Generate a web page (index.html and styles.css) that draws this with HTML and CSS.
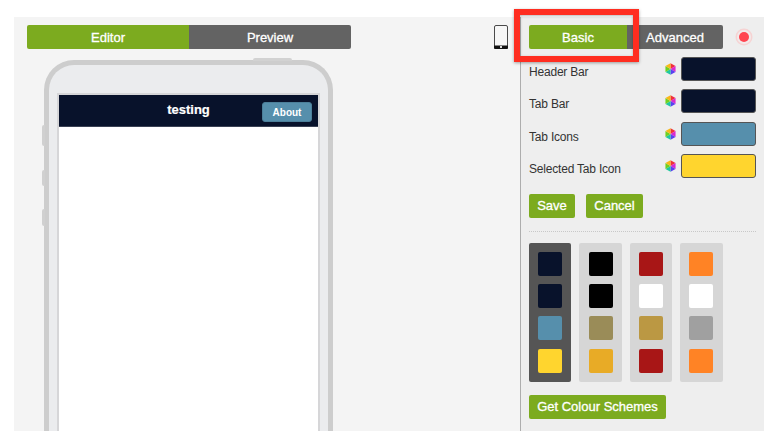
FILE: index.html
```html
<!DOCTYPE html>
<html lang="en">
<head>
<meta charset="utf-8">
<title>App editor</title>
<link rel="stylesheet" href="styles.css">
</head>
<body>
<main class="workspace">
  <section class="stage">
    <div class="stage-top">
      <div class="tabs view-tabs">
        <div class="tab active editor-tab">Editor</div>
        <div class="tab preview-tab">Preview</div>
      </div>
      <svg class="device-icon" width="14" height="24" viewBox="0 0 14 24" aria-hidden="true">
        <rect x="0.5" y="0.5" width="13" height="23" rx="1.5" fill="#f6f6f6" stroke="#4a4a4a" stroke-width="1"/>
        <rect x="0" y="20.5" width="14" height="3.5" rx="1" fill="#111"/>
        <rect x="6" y="21" width="2" height="2" fill="#ddd"/>
      </svg>
    </div>
    <div class="phone">
      <div class="phone-top-button"></div>
      <div class="phone-side-button b1"></div>
      <div class="phone-side-button b2"></div>
      <div class="phone-side-button b3"></div>
      <div class="screen">
        <div class="app-header">
          <span class="app-title">testing</span>
          <span class="about">About</span>
        </div>
      </div>
    </div>
  </section>
  <aside class="panel">
    <div class="panel-top">
      <div class="tabs mode-tabs">
        <div class="tab active basic-tab">Basic</div>
        <div class="tab advanced-tab">Advanced</div>
      </div>
      <span class="record"></span>
    </div>
    <div class="rows">
      <div class="row"><span class="label">Header Bar</span><svg class="wheel" viewBox="0.8 0.3 10.4 11.4" aria-hidden="true"><polygon points="6,6 6,0.5 10.8,3.2" fill="#f0303a"/><polygon points="6,6 10.8,3.2 10.8,8.8" fill="#d82ad0"/><polygon points="6,6 10.8,8.8 6,11.5" fill="#5a40f0"/><polygon points="6,6 6,11.5 1.2,8.8" fill="#20c8a0"/><polygon points="6,6 1.2,8.8 1.2,3.2" fill="#70d020"/><polygon points="6,6 1.2,3.2 6,0.5" fill="#f8b818"/></svg><span class="field navy"></span></div>
      <div class="row"><span class="label">Tab Bar</span><svg class="wheel" viewBox="0.8 0.3 10.4 11.4" aria-hidden="true"><polygon points="6,6 6,0.5 10.8,3.2" fill="#f0303a"/><polygon points="6,6 10.8,3.2 10.8,8.8" fill="#d82ad0"/><polygon points="6,6 10.8,8.8 6,11.5" fill="#5a40f0"/><polygon points="6,6 6,11.5 1.2,8.8" fill="#20c8a0"/><polygon points="6,6 1.2,8.8 1.2,3.2" fill="#70d020"/><polygon points="6,6 1.2,3.2 6,0.5" fill="#f8b818"/></svg><span class="field navy"></span></div>
      <div class="row"><span class="label">Tab Icons</span><svg class="wheel" viewBox="0.8 0.3 10.4 11.4" aria-hidden="true"><polygon points="6,6 6,0.5 10.8,3.2" fill="#f0303a"/><polygon points="6,6 10.8,3.2 10.8,8.8" fill="#d82ad0"/><polygon points="6,6 10.8,8.8 6,11.5" fill="#5a40f0"/><polygon points="6,6 6,11.5 1.2,8.8" fill="#20c8a0"/><polygon points="6,6 1.2,8.8 1.2,3.2" fill="#70d020"/><polygon points="6,6 1.2,3.2 6,0.5" fill="#f8b818"/></svg><span class="field steel"></span></div>
      <div class="row"><span class="label">Selected Tab Icon</span><svg class="wheel" viewBox="0.8 0.3 10.4 11.4" aria-hidden="true"><polygon points="6,6 6,0.5 10.8,3.2" fill="#f0303a"/><polygon points="6,6 10.8,3.2 10.8,8.8" fill="#d82ad0"/><polygon points="6,6 10.8,8.8 6,11.5" fill="#5a40f0"/><polygon points="6,6 6,11.5 1.2,8.8" fill="#20c8a0"/><polygon points="6,6 1.2,8.8 1.2,3.2" fill="#70d020"/><polygon points="6,6 1.2,3.2 6,0.5" fill="#f8b818"/></svg><span class="field yellow"></span></div>
    </div>
    <div class="actions">
      <span class="btn save">Save</span>
      <span class="btn cancel">Cancel</span>
    </div>
    <div class="divider"></div>
    <div class="schemes">
      <div class="scheme selected">
        <span class="chip navy"></span><span class="chip navy"></span><span class="chip steel"></span><span class="chip yellow"></span>
      </div>
      <div class="scheme">
        <span class="chip black"></span><span class="chip black"></span><span class="chip khaki"></span><span class="chip amber"></span>
      </div>
      <div class="scheme">
        <span class="chip red"></span><span class="chip white"></span><span class="chip gold"></span><span class="chip red"></span>
      </div>
      <div class="scheme">
        <span class="chip orange"></span><span class="chip white"></span><span class="chip grey"></span><span class="chip orange"></span>
      </div>
    </div>
    <span class="btn get">Get Colour Schemes</span>
  </aside>
</main>
<div class="highlight"></div>
</body>
</html>
```

FILE: styles.css
```css
* { box-sizing: border-box; }
html, body { margin: 0; height: 100%; }
body {
  background: #fff;
  font-family: "Liberation Sans", Arial, sans-serif;
  overflow: hidden;
  position: relative;
}
.workspace {
  display: flex;
  width: 750px;
  height: 414px;
  margin: 17px 0 0 14px;
  background: #f4f4f4;
  overflow: hidden;
}
.stage { width: 506px; flex: none; padding: 8px 0 0 13px; }
.stage-top { display: flex; align-items: flex-start; height: 24px; }
.device-icon { margin-left: 143px; flex: none; }
.tabs { display: flex; height: 24px; border-radius: 2px; overflow: hidden; }
.tab {
  display: flex; align-items: center; justify-content: center;
  background: #636363; color: #fff;
  font-size: 13px; font-weight: 400; -webkit-text-stroke: 0.3px #fff;
}
.tab.active { background: #7cab1f; }
.view-tabs { width: 324px; flex: none; }
.editor-tab { width: 162px; }
.preview-tab { width: 162px; }
.phone {
  position: relative;
  width: 289px;
  height: 400px;
  margin: 11px 0 0 17px;
  padding: 28px 8px 0 8px;
  background: #ebecee;
  border: 5px solid #cdcdcd;
  border-bottom: 0;
  border-radius: 30px 30px 0 0;
}
.phone-top-button {
  position: absolute; top: -7px; left: 204px;
  width: 39px; height: 3px;
  background: #d2d2d2; border-radius: 2px 2px 0 0;
}
.phone-side-button {
  position: absolute; left: -7px; width: 3px;
  background: #d0d0d0; border-radius: 2px 0 0 2px;
}
.b1 { top: 60px; height: 21px; }
.b2 { top: 105px; height: 16px; }
.b3 { top: 144px; height: 17px; }
.screen {
  height: 100%;
  background: #fff;
  border: 2px solid #d6d6d8;
  border-bottom: 0;
}
.app-header {
  position: relative;
  display: flex; align-items: center; justify-content: center;
  height: 32px;
  background: #08122b;
  border-bottom: 1px solid #3a4154;
}
.app-title { color: #fff; font-size: 13px; font-weight: 700; margin-top: -2px; -webkit-text-stroke: 0.2px #fff; }
.about {
  position: absolute; right: 6px; top: 7px;
  width: 50px; height: 20px;
  display: flex; align-items: center; justify-content: center;
  background: #568fac;
  border: 1px solid #4c7f99;
  border-radius: 3px;
  color: #fff; font-size: 10px; font-weight: 700;
}
.panel {
  width: 244px; flex: none;
  border-left: 1px solid #adadad;
  background: #eeeeee;
  padding: 8px 0 0 8px;
}
.panel-top { display: flex; align-items: center; }
.mode-tabs { width: 194px; }
.basic-tab { width: 98px; }
.advanced-tab { width: 96px; }
.record {
  width: 10px; height: 10px; margin-left: 16px;
  border-radius: 50%;
  background: #ff4550;
  box-shadow: 0 0 0 2px #f2eaea, 0 0 0 3.5px #f6d3d3;
}
.rows { margin-top: 8px; display: flex; flex-direction: column; gap: 8.4px; }
.row { display: flex; align-items: center; height: 24px; width: 227px; }
.label { flex: 1; color: #333; font-size: 12px; padding-top: 6px; letter-spacing: -0.2px; }
.wheel { width: 11px; height: 12px; margin: 0 5px 0 0; flex: none; }
.field {
  width: 75px; height: 24px; flex: none;
  border: 1px solid #555; border-radius: 3px;
}
.navy { background: #08122b; }
.steel { background: #568fac; }
.yellow { background: #ffd52e; }
.black { background: #000; }
.khaki { background: #9a8c58; }
.amber { background: #e8ab26; }
.red { background: #a81616; }
.white { background: #fff; }
.gold { background: #bb9843; }
.orange { background: #ff8325; }
.grey { background: #a0a0a0; }
.actions { display: flex; gap: 11px; margin-top: 15.6px; }
.btn {
  display: inline-flex; align-items: center; justify-content: center;
  height: 24px;
  background: #7cab1f; color: #fff;
  border-radius: 2px;
  font-size: 13px; -webkit-text-stroke: 0.3px #fff;
}
.save { width: 46px; }
.cancel { width: 57px; }
.divider { width: 227px; margin-top: 13px; border-top: 1px dotted #c8c8c8; }
.schemes { display: flex; gap: 8px; margin-top: 11px; }
.scheme {
  width: 42.4px; height: 139px;
  padding-top: 9px;
  display: flex; flex-direction: column; align-items: center; gap: 8.3px;
  background: #d6d6d6;
  border-radius: 2px;
}
.scheme.selected { background: #555; }
.chip { width: 24px; height: 24px; flex: none; border-radius: 2px; }
.get { width: 137px; margin-top: 13px; }
.highlight {
  position: absolute; left: 514px; top: 9px;
  width: 125px; height: 53px;
  border: 6px solid #ff2d20;
  box-shadow: 0 1px 3px rgba(0,0,0,.35), inset 0 1px 3px rgba(0,0,0,.3);
}
```
